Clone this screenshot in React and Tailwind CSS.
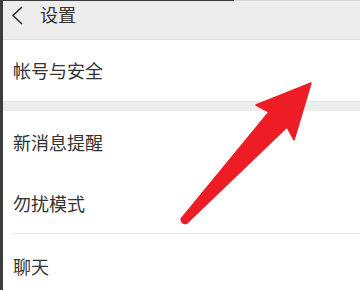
export default function App() {
  const font = { fontFamily: '"Noto Sans CJK SC", "Noto Sans", sans-serif' };
  return (
    <div
      className="relative w-[360px] h-[290px] overflow-hidden bg-white border-l-[3px] border-[#3d3d3d] text-[#333333]"
      style={font}
    >
      <div className="flex h-px">
        <div className="w-[231px] bg-[#3d3d3d]" />
        <div className="flex-1 bg-[#d3d8d7]" />
      </div>
      <div className="h-[39px] bg-[#ededed] border-b border-[#e2e2e2] flex items-start pt-[1px]">
        <svg width="18" height="26" viewBox="0 0 18 26" className="ml-[5px]">
          <path d="M14 5 L5 13.5 L14 22" fill="none" stroke="#333" strokeWidth="1.6" />
        </svg>
        <span className="ml-[14px] text-[18px] leading-[24px]">设置</span>
      </div>
      <div className="h-[61px] flex items-center pl-[10px] text-[18px]">帐号与安全</div>
      <div className="h-[10px] bg-[#ededed] border-t border-[#e6e6e6]" />
      <div className="h-[63px] flex items-center pl-[10px] text-[18px]">新消息提醒</div>
      <div className="h-[59px] flex items-center pl-[10px] text-[18px]">勿扰模式</div>
      <div className="ml-[9px] h-px bg-[#e5e5e5]" />
      <div className="h-[65px] flex items-center pl-[10px] text-[18px]">聊天</div>

      <svg
        className="absolute left-[-3px] top-0"
        width="360"
        height="290"
        viewBox="0 0 360 290"
      >
        <path
          d="M311 83 L256 105 L269 112 L181 219 Q182 225 187 223 L287 127 L294 140 Z"
          fill="#ee1c25"
          stroke="#ee1c25"
          strokeWidth="1.5"
          strokeLinejoin="round"
        />
      </svg>
    </div>
  );
}
